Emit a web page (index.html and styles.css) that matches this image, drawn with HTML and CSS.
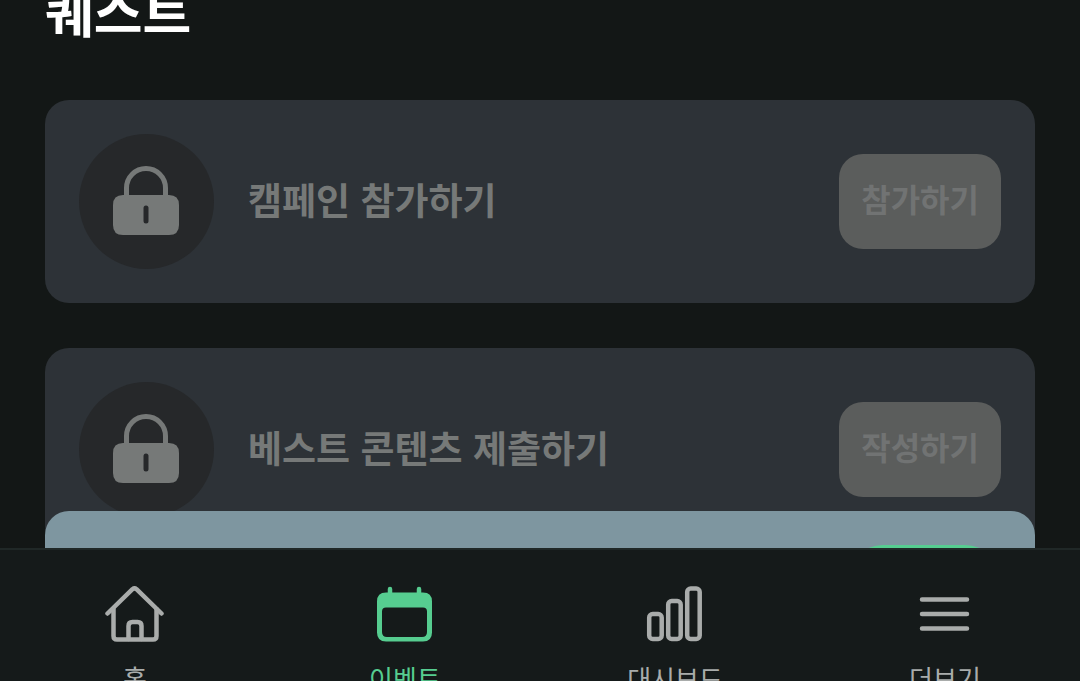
FILE: index.html
```html
<!DOCTYPE html>
<html lang="ko">
<head>
  <meta charset="UTF-8" />
  <meta name="viewport" content="width=device-width, initial-scale=1" />
  <title>퀘스트</title>
  <link rel="stylesheet" href="styles.css">
</head>
<body>
  <main>
    <h1>퀘스트</h1>

    <ul class="quests">
      <li class="quest">
        <span class="badge">
          <svg viewBox="0 0 68 70" width="68" height="70">
            <path d="M13.500 31V22a19.500 19.500 0 0 1 39 0v9" fill="none" stroke="#767978" stroke-width="5"/>
            <path d="M10 29h46q10 0 10 10v20q0 10-10 10H10Q0 69 0 59V39q0-10 10-10z" fill="#767978"/>
            <path d="M33 42v13" stroke="#26282a" stroke-width="5" stroke-linecap="round"/>
          </svg>
        </span>
        <h2>캠페인 참가하기</h2>
        <button type="button" disabled>참가하기</button>
      </li>
      <li class="quest">
        <span class="badge">
          <svg viewBox="0 0 68 70" width="68" height="70">
            <path d="M13.500 31V22a19.500 19.500 0 0 1 39 0v9" fill="none" stroke="#767978" stroke-width="5"/>
            <path d="M10 29h46q10 0 10 10v20q0 10-10 10H10Q0 69 0 59V39q0-10 10-10z" fill="#767978"/>
            <path d="M33 42v13" stroke="#26282a" stroke-width="5" stroke-linecap="round"/>
          </svg>
        </span>
        <h2>베스트 콘텐츠 제출하기</h2>
        <button type="button" disabled>작성하기</button>
      </li>
      <li class="quest open">
        <button type="button">참가하기</button>
      </li>
    </ul>
  </main>

  <nav>
    <a href="#home">
      <svg viewBox="0 0 60 60" width="60" height="60" fill="none" stroke="#a9acab" stroke-width="4.500" stroke-linecap="round" stroke-linejoin="round">
        <path d="M2.500 28.500 27.500 4.200Q29.500 2.500 31.500 4.200L56.500 28.500"/>
        <path d="M8.500 24v27q0 3.500 3.500 3.500h36q3.500 0 3.500-3.500V24"/>
        <path d="M23.500 54V41q0-4 4-4h5q4 0 4 4v13"/>
      </svg>
      <span>홈</span>
    </a>
    <a href="#event" class="active">
      <svg viewBox="0 0 60 60" width="60" height="60">
        <path d="M15 4v6M44 4v6" stroke="#56cd90" stroke-width="4.500" stroke-linecap="round"/>
        <path fill="#56cd90" fill-rule="evenodd" d="M11 7.500h37q9 0 9 9v31q0 9-9 9H11q-9 0-9-9v-31q0-9 9-9zM11 22.500q-4 0-4 4V47q0 5 5 5h35q5 0 5-5V26.500q0-4-4-4z"/>
      </svg>
      <span>이벤트</span>
    </a>
    <a href="#dashboard">
      <svg viewBox="0 0 60 60" width="60" height="60" fill="none" stroke="#a9acab" stroke-width="4.500">
        <rect x="4.200" y="29" width="12.500" height="25" rx="3.500"/>
        <rect x="23.200" y="16" width="12.500" height="38" rx="3.500"/>
        <rect x="42.200" y="3.500" width="12.500" height="50.500" rx="3.500"/>
      </svg>
      <span>대시보드</span>
    </a>
    <a href="#more">
      <svg viewBox="0 0 60 60" width="60" height="60" stroke="#a9acab" stroke-width="4.500" stroke-linecap="round">
        <path d="M7 14.500h45M7 29h45M7 43.500h45"/>
      </svg>
      <span>더보기</span>
    </a>
  </nav>
</body>
</html>
```
FILE: styles.css
```css
* {
  box-sizing: border-box;
}

body {
  margin: 0;
  height: 100vh;
  display: flex;
  flex-direction: column;
  overflow: hidden;
  background: #131716;
  color: white;
  font-family: "Noto Sans CJK KR", sans-serif;
}

main {
  flex: 1;
  min-height: 0;
  padding: 0 45px;
  overflow: hidden;
}

h1 {
  margin: -30px 0 50px;
  font-size: 53px;
  line-height: 80px;
  font-weight: bold;
}

.quests {
  margin: 0;
  padding: 0;
  list-style: none;
}

.quest {
  display: flex;
  align-items: center;
  gap: 34px;
  min-height: 203px;
  margin-bottom: 45px;
  padding: 0 34px;
  border-radius: 24px;
  background: #2d3237;
}

.badge {
  display: flex;
  justify-content: center;
  align-items: center;
  width: 135px;
  height: 135px;
  padding-bottom: 2px;
  border-radius: 50%;
  background: #26282a;
}

.quest h2 {
  flex: 1;
  margin: 0;
  padding-bottom: 6px;
  font-size: 37px;
  line-height: 54px;
  font-weight: bold;
  color: #767978;
}

.quest button {
  padding: 21px 22px 27px;
  border: none;
  border-radius: 24px;
  background: #5b5d5c;
  color: #717373;
  font-family: inherit;
  font-size: 32px;
  line-height: 47px;
  font-weight: bold;
}

/* the open quest slides over the locked one above it */
.quest.open {
  position: relative;
  align-items: flex-start;
  justify-content: flex-end;
  margin-top: -85px;
  padding-top: 34px;
  background: #7e96a0;
}

.quest.open button {
  padding: 21px 18px 27px;
  border-radius: 36px;
  background: #56cd90;
  color: #131716;
  cursor: pointer;
}

nav {
  display: flex;
  height: 133px;
  padding-top: 35px;
  border-top: 2px solid #202827;
  background: #151a1a;
  overflow: hidden;
}

nav a {
  flex: 1;
  display: flex;
  flex-direction: column;
  align-items: center;
  gap: 14px;
  color: #a9acab;
  font-size: 26px;
  line-height: 38px;
  text-decoration: none;
}

nav svg {
  flex-shrink: 0;
}

nav a.active {
  color: #56cd90;
}
```
